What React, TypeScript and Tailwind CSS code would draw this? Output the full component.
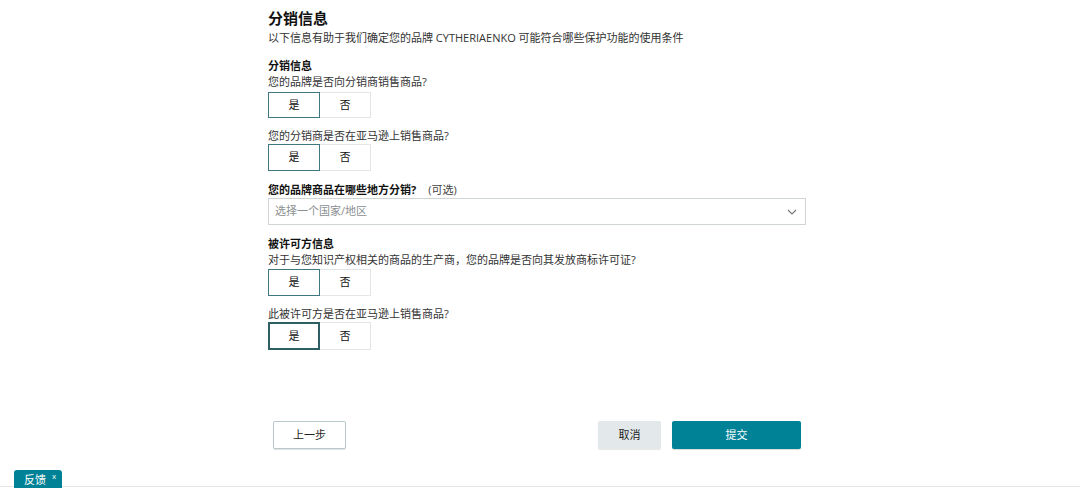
import { useState } from "react";

const font = { fontFamily: '"Open Sans", "Noto Sans CJK SC", sans-serif' };

function YesNo({ value, onChange, strong, tall }: { value: string; onChange: (v: string) => void; strong?: boolean; tall?: string }) {
  const h = tall ?? "h-[27px]";
  return (
    <div className={`flex ${h}`}>
      <button
        onClick={() => onChange("yes")}
        className={`w-[52px] h-full text-[11px] text-[#111] bg-white ${
          value === "yes"
            ? strong
              ? "border-2 border-[#2f5f66]"
              : "border border-[#3f7880]"
            : "border border-[#dfe3e4]"
        }`}
      >
        是
      </button>
      <button
        onClick={() => onChange("no")}
        className={`w-[51px] h-full text-[11px] text-[#111] bg-white border-y border-r ${
          value === "no" ? "border-[#3f7880]" : "border-[#e3e6e7]"
        }`}
      >
        否
      </button>
    </div>
  );
}

export default function App() {
  const [a, setA] = useState("yes");
  const [b, setB] = useState("yes");
  const [c, setC] = useState("yes");
  const [d, setD] = useState("yes");

  return (
    <div className="relative h-[488px] w-[1080px] bg-white text-[#111] overflow-hidden" style={font}>
      <div className="ml-[268px] w-[538px] pt-[8px]">
        <h1 className="text-[15px] leading-[20px] font-bold">分销信息</h1>
        <p className="mt-[2px] text-[11px] leading-4 text-[#333]">
          以下信息有助于我们确定您的品牌 CYTHERIAENKO 可能符合哪些保护功能的使用条件
        </p>

        <h2 className="mt-[12px] text-[11px] leading-4 font-bold">分销信息</h2>
        <p className="text-[11px] leading-4 text-[#333]">您的品牌是否向分销商销售商品?</p>
        <div className="mt-[2px]">
          <YesNo value={a} onChange={setA} tall="h-[26px]" />
        </div>

        <p className="mt-[10px] text-[11px] leading-4 text-[#333]">您的分销商是否在亚马逊上销售商品?</p>
        <YesNo value={b} onChange={setB} />

        <p className="mt-[11px] text-[11px] leading-4">
          <span className="font-bold">您的品牌商品在哪些地方分销?</span>
          <span className="ml-[12px] text-[#444]">(可选)</span>
        </p>
        <div className="h-[27px] flex items-center justify-between border border-[#cfd4d6] px-[6px] text-[11px] text-[#8a8f91]">
          <span>选择一个国家/地区</span>
          <svg width="10" height="6" viewBox="0 0 10 6" className="mr-[2px]">
            <path d="M1 1l4 4 4-4" fill="none" stroke="#777" strokeWidth="1.2" />
          </svg>
        </div>

        <h2 className="mt-[11px] text-[11px] leading-4 font-bold">被许可方信息</h2>
        <p className="text-[11px] leading-4 text-[#333]">
          对于与您知识产权相关的商品的生产商，您的品牌是否向其发放商标许可证?
        </p>
        <div className="mt-[1px]">
          <YesNo value={c} onChange={setC} />
        </div>

        <p className="mt-[10px] text-[11px] leading-4 text-[#333]">此被许可方是否在亚马逊上销售商品?</p>
        <YesNo value={d} onChange={setD} strong tall="h-[28px]" />

        <div className="mt-[71px] flex items-center justify-between px-[5px]">
          <button className="w-[73px] h-[28px] border border-[#b9c9cb] rounded-[2px] bg-white text-[11px] text-[#222] shadow-[0_1px_1px_rgba(0,0,0,0.12)]">
            上一步
          </button>
          <div className="flex gap-[11px]">
            <button className="w-[63px] h-[28px] rounded-[2px] bg-[#e3e9ea] text-[11px] text-[#222] shadow-[0_1px_1px_rgba(0,0,0,0.1)]">
              取消
            </button>
            <button className="w-[129px] h-[28px] rounded-[2px] bg-[#008296] text-[11px] text-white shadow-[0_1px_1px_rgba(0,0,0,0.15)]">
              提交
            </button>
          </div>
        </div>
      </div>

      <div className="absolute left-0 right-0 bottom-[1px] border-t border-[#e6e6e6]" />
      <div className="absolute left-[14px] bottom-0 w-[48px] h-[18px] rounded-t-[3px] bg-[#008296] flex items-start pl-[10px] pt-[3px] text-white">
        <span className="text-[11px] leading-[14px]">反馈</span>
        <span className="ml-[6px] text-[8px] leading-[8px] -mt-[1px]">x</span>
      </div>
    </div>
  );
}
